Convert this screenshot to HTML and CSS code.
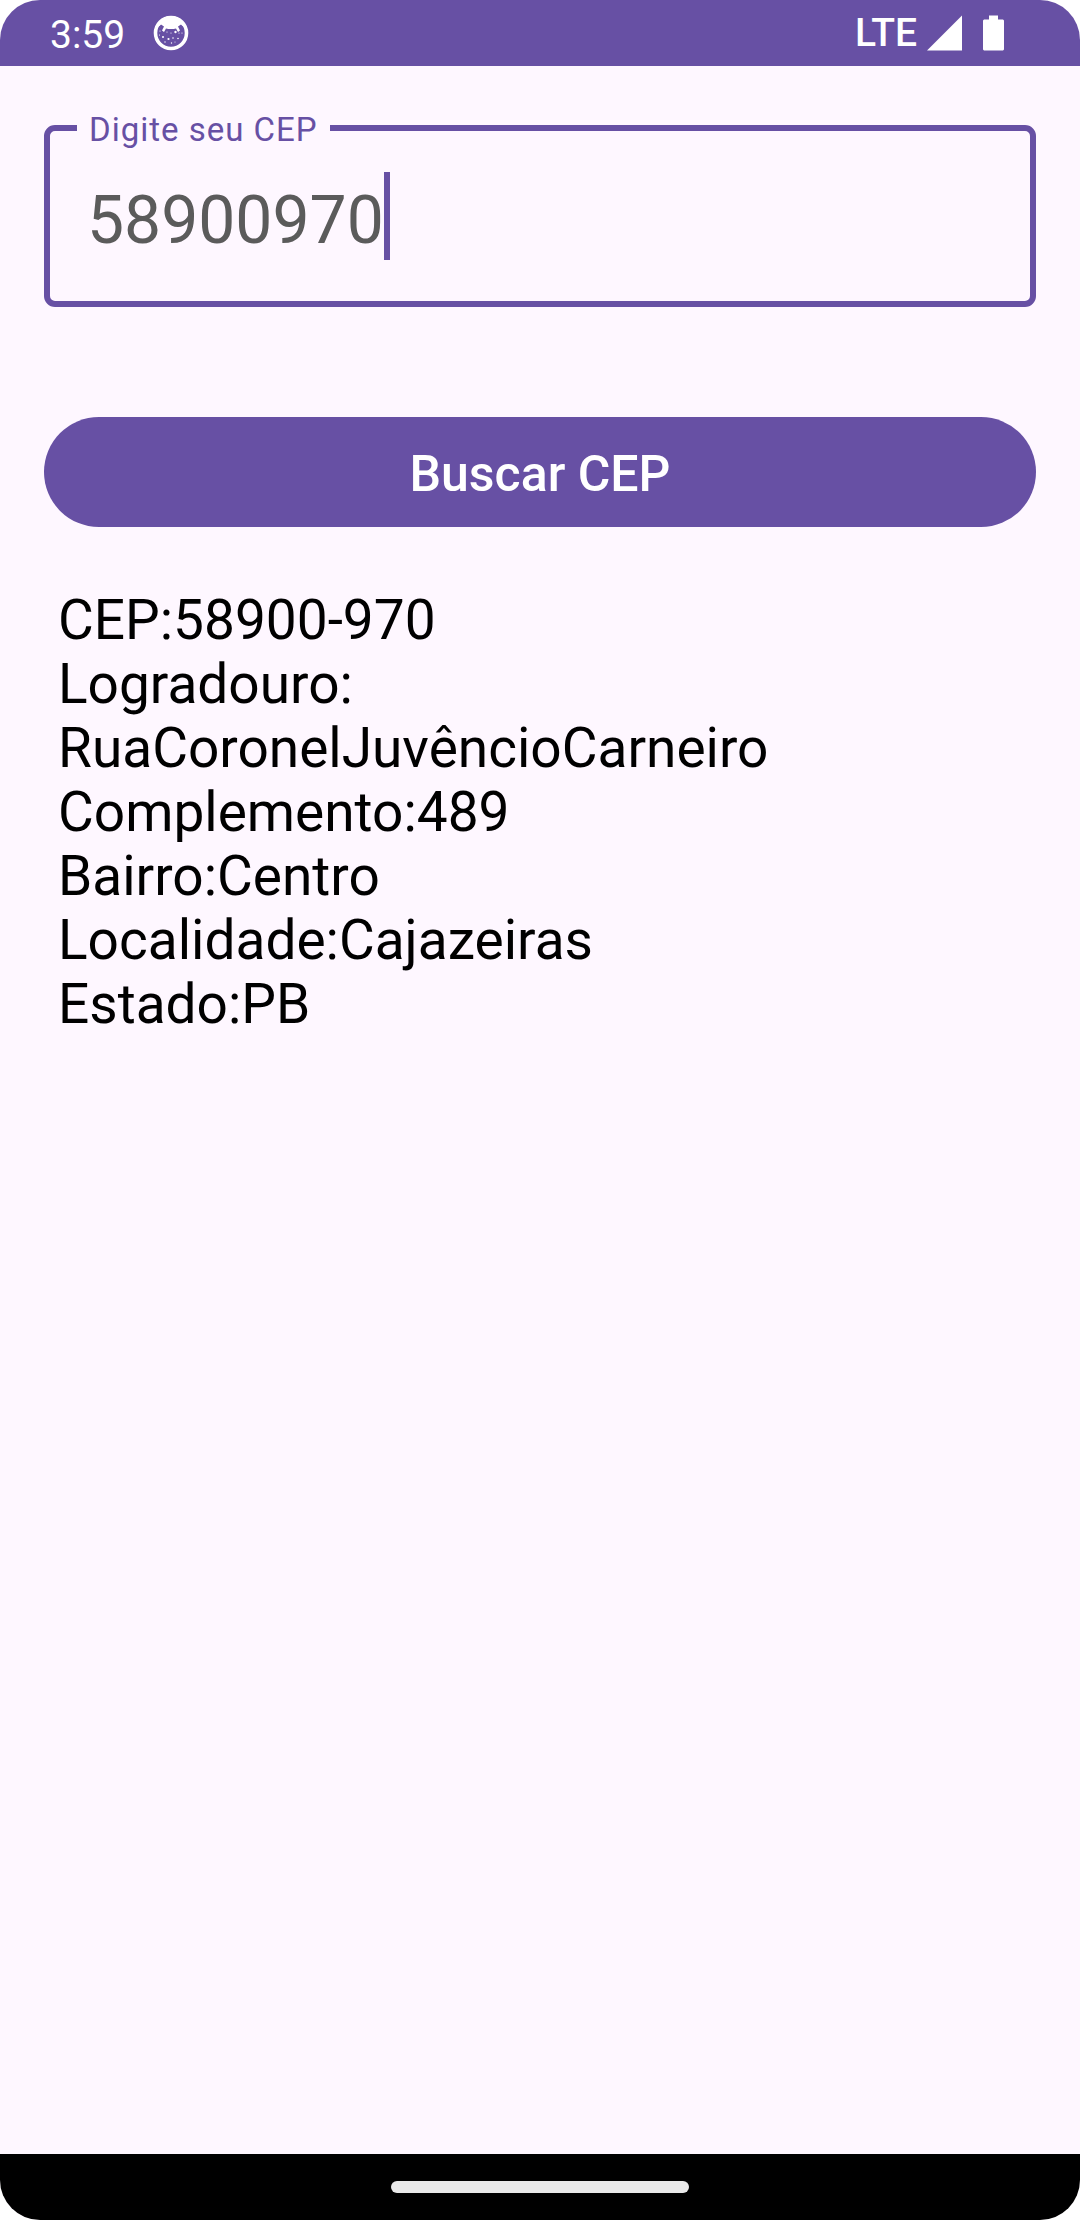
FILE: index.html
```html
<!DOCTYPE html>
<html lang="pt-BR">
<head>
<meta charset="utf-8">
<meta name="viewport" content="width=device-width, initial-scale=1">
<title>Buscar CEP</title>
<link rel="stylesheet" href="styles.css">
</head>
<body>
<div class="screen">
  <header class="status-bar">
    <div class="status-group status-start">
      <span class="clock">3:59</span>
      <svg class="status-icon" viewBox="0 0 36 36" aria-hidden="true">
        <circle cx="18" cy="18" r="15.5" fill="none" stroke="#fff" stroke-width="3.6"/>
        <path fill="#fff" d="M4.500 10C8 4 12 1 18 1s10 3 13.500 9l-2 1-1.500-1.500-3 2 2 4-2 1.500-2-3.500c-3 .8-7 .8-10 0l-2 3.500-2-1.500 2-4-3-2L6.500 11z"/>
        <g fill="#fff">
          <circle cx="22.500" cy="17" r="1.200"/><circle cx="14" cy="17" r=".6"/><circle cx="18" cy="18" r=".6"/>
          <circle cx="10" cy="22" r="1"/><circle cx="15.500" cy="24" r="1.100"/><circle cx="20" cy="23" r=".8"/>
          <circle cx="26" cy="18" r=".6"/><circle cx="25" cy="23.500" r=".8"/><circle cx="7" cy="16" r=".6"/>
          <circle cx="12" cy="27" r=".7"/><circle cx="18.500" cy="28" r=".7"/><circle cx="29" cy="18" r=".6"/>
          <circle cx="22" cy="27" r=".5"/><circle cx="6.500" cy="20" r=".6"/>
        </g>
      </svg>
    </div>
    <div class="status-group status-end">
      <span class="network">LTE</span>
      <svg class="status-icon" viewBox="0 0 36 36" aria-hidden="true"><path fill="#fff" d="M35 0.500V35.500H0z"/></svg>
      <svg class="battery-icon" viewBox="0 0 21 36" aria-hidden="true"><path fill="#fff" d="M6 .5h9v4h5l1 1v29l-1 1H1l-1-1v-29l1-1h5z"/></svg>
    </div>
  </header>

  <main class="content">
    <form class="search">
      <fieldset class="field">
        <legend class="field-legend"><label for="cep">Digite seu CEP</label></legend>
        <div class="field-row">
          <input class="field-input" id="cep" type="text" inputmode="numeric" maxlength="8" value="58900970">
          <span class="caret"></span>
        </div>
      </fieldset>
      <button class="search-button" type="button">Buscar CEP</button>
    </form>
    <section class="result">
      <div>CEP:58900-970</div>
      <div>Logradouro:</div>
      <div>RuaCoronelJuvêncioCarneiro</div>
      <div>Complemento:489</div>
      <div>Bairro:Centro</div>
      <div>Localidade:Cajazeiras</div>
      <div>Estado:PB</div>
    </section>
  </main>

  <footer class="nav-bar"><span class="nav-handle"></span></footer>
</div>
</body>
</html>
```
FILE: styles.css
```css
:root {
  --primary: #6750a4;
  --surface: #fef7ff;
}

* {
  box-sizing: border-box;
}

body {
  margin: 0;
  background: #fff;
  font-family: Roboto, sans-serif;
  color: #000;
}

.screen {
  display: flex;
  flex-direction: column;
  min-height: 100vh;
  overflow: hidden;
  border-radius: 40px;
  background: var(--surface);
}

.status-bar {
  display: flex;
  justify-content: space-between;
  align-items: center;
  height: 66px;
  padding: 0 76px 0 50px;
  background: var(--primary);
  color: #fff;
}

.status-group {
  display: flex;
  align-items: center;
}

.status-start {
  gap: 28px;
}

.status-end {
  gap: 10px;
}

.clock,
.network {
  font-size: 39px;
  line-height: 46px;
}

.clock {
  padding-top: 4px;
}

.network {
  font-weight: 500;
}

.status-icon {
  width: 36px;
  height: 36px;
}

.battery-icon {
  width: 21px;
  height: 36px;
  margin-left: 10px;
}

.content {
  flex: 1;
  padding: 41px 44px;
}

.search {
  display: flex;
  flex-direction: column;
  gap: 110px;
}

.field {
  min-width: 0;
  margin: 0;
  padding: 23px 27px 41px;
  border: 6px solid var(--primary);
  border-radius: 11px;
}

.field-legend {
  padding: 4px 12px 0;
  font-size: 33px;
  line-height: 38px;
  letter-spacing: 1px;
  color: var(--primary);
}

.field-row {
  display: flex;
  padding-left: 10px;
}

.field-input {
  width: 8ch;
  height: 88px;
  padding: 8px 0 0;
  border: 0;
  outline: 0;
  background: transparent;
  font: 66px/80px Roboto, sans-serif;
  color: #5b5b5b;
}

.caret {
  width: 6px;
  height: 88px;
  background: var(--primary);
}

.search-button {
  height: 110px;
  padding: 4px 66px 0;
  border: 0;
  border-radius: 55px;
  background: var(--primary);
  font: 500 50px/60px Roboto, sans-serif;
  color: #fff;
}

.result {
  padding: 61px 14px;
  font-size: 55px;
  line-height: 64px;
}

.nav-bar {
  display: flex;
  justify-content: center;
  align-items: center;
  height: 66px;
  background: #000;
}

.nav-handle {
  width: 298px;
  height: 12px;
  border-radius: 6px;
  background: #e9e9e9;
}
```
